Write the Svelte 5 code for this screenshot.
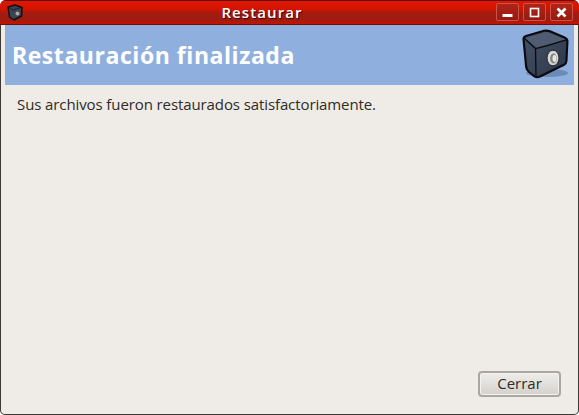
<script lang="ts">
  const title = 'Restaurar';
  const heading = 'Restauración finalizada';
  const message = 'Sus archivos fueron restaurados satisfactoriamente.';
</script>

<div class="window">
  <header class="titlebar">
    <svg class="app-icon" width="16" height="17" viewBox="0 0 16 17">
      <path d="M1 3 L8 1 L15 3.500 L14.500 12 L7 16 L2.500 13 Z" fill="#3a4454" stroke="#111" stroke-width="1.500" stroke-linejoin="round" />
      <path d="M2 3.500 L6 6 L14 3.500" fill="none" stroke="#151518" stroke-width="0.800" />
      <circle cx="10.500" cy="9.500" r="2" fill="#a8a8a8" />
    </svg>
    <span class="title">{title}</span>
    <div class="controls">
      <button class="ctl" aria-label="Minimizar">
        <svg width="11" height="11" viewBox="0 0 11 11"><rect x="0.500" y="7" width="10" height="3" fill="#fff" /></svg>
      </button>
      <button class="ctl" aria-label="Maximizar">
        <svg width="11" height="11" viewBox="0 0 11 11"><rect x="1.500" y="1.500" width="8" height="8" fill="none" stroke="#fff" stroke-width="1.600" /></svg>
      </button>
      <button class="ctl" aria-label="Cerrar">
        <svg width="11" height="11" viewBox="0 0 11 11"><path d="M1.500 1.500 L9.500 9.500 M9.500 1.500 L1.500 9.500" stroke="#fff" stroke-width="2.600" /></svg>
      </button>
    </div>
  </header>

  <div class="content">
    <div class="banner">
      <h1>{heading}</h1>
      <svg class="safe" width="48" height="52" viewBox="0 0 48 52">
        <defs>
          <linearGradient id="front" x1="0" y1="0" x2="1" y2="1">
            <stop offset="0" stop-color="#46536a" />
            <stop offset="1" stop-color="#2c3646" />
          </linearGradient>
        </defs>
        <ellipse cx="26" cy="44" rx="21" ry="4" fill="#5f7ea8" opacity="0.75" />
        <path d="M2.500 10 C2.500 8.500 3.500 7.500 5 7 L23 1.800 C25 1.300 27 1.500 29 2.300 L43.500 8.500 C45.500 9.400 46.500 10.500 46.400 12.500 L45.400 32 C45.300 34 44.500 35 43 35.800 L19 47.500 C17 48.400 15 48.300 13.500 47.300 L8 43 C6.500 41.800 5.500 40 5.200 38 Z" fill="url(#front)" stroke="#0b0b0e" stroke-width="2.200" stroke-linejoin="round" />
        <path d="M4.500 9.500 L15 18.500 L44.500 10.500 L28 3.800 C26.500 3.200 25 3.100 23.500 3.500 L6 8.500 Z" fill="#4f5c72" />
        <path d="M3.500 9.500 L14.500 19.500 C19 19 35 14 45.500 10.800 M14.500 19.500 L15 47" fill="none" stroke="#0b0b0e" stroke-width="1.300" />
        <ellipse cx="32" cy="29" rx="6" ry="7.800" fill="#d6d6d2" stroke="#20242c" stroke-width="1" />
        <ellipse cx="32.500" cy="29.500" rx="3.400" ry="5" fill="#85857f" />
        <ellipse cx="33.500" cy="29.500" rx="2" ry="3.400" fill="#e6e6e2" />
      </svg>
    </div>
    <p class="message">{message}</p>
    <div class="actions">
      <button class="close">Cerrar</button>
    </div>
  </div>
</div>

<style>
  :global(body) {
    margin: 0;
    background: #fff;
  }

  .window {
    width: 579px;
    height: 415px;
    box-sizing: border-box;
    display: flex;
    flex-direction: column;
    background: #efebe6;
    border-radius: 6px 6px 5px 5px;
    overflow: hidden;
    font-family: "Open Sans", "Noto Sans", sans-serif;
    box-shadow: inset 0 0 0 1px #3c3833;
  }

  .titlebar {
    height: 25px;
    flex-shrink: 0;
    box-sizing: border-box;
    display: flex;
    align-items: center;
    padding: 0 6px 1px 7px;
    background: linear-gradient(#e01600 0, #d01400 38%, #a31c12 52%, #9e1b10 82%, #c81300 100%);
    border-top: 1px solid #5a0f08;
    border-bottom: 1px solid #6d1008;
  }

  .app-icon {
    flex-shrink: 0;
  }

  .title {
    flex: 1;
    margin-left: 5px;
    text-align: center;
    color: #fff;
    font-size: 15px;
    font-weight: 600;
    text-shadow: 1px 1px 1px #3a0500;
    letter-spacing: 1.1px;
  }

  .controls {
    display: flex;
    gap: 4px;
  }

  .ctl {
    width: 23px;
    height: 18px;
    padding: 0;
    display: flex;
    align-items: center;
    justify-content: center;
    background: linear-gradient(#b02418, #98190f);
    border: 1px solid #c9544c;
    border-radius: 2px;
  }

  .content {
    flex: 1;
    display: flex;
    flex-direction: column;
    padding: 0 5px 18px;
    min-height: 0;
  }

  .banner {
    height: 60px;
    flex-shrink: 0;
    display: flex;
    align-items: center;
    justify-content: space-between;
    background: #8fb0df;
    padding: 0 5px 0 7px;
  }

  h1 {
    margin: 0;
    color: #fff;
    font-size: 23px;
    font-weight: 700;
    letter-spacing: 0.55px;
  }

  .message {
    margin: 9px 0 0 12px;
    font-size: 15px;
    letter-spacing: -0.1px;
    color: #2e2c28;
  }

  .actions {
    margin-top: auto;
    display: flex;
    justify-content: flex-end;
    padding-right: 13px;
  }

  .close {
    width: 83px;
    height: 26px;
    padding: 0 0 3px;
    font-family: inherit;
    font-size: 15px;
    color: #2e2c28;
    background: linear-gradient(#efedea, #d4d1cd);
    border: 2px solid #a9a7a3;
    border-radius: 4px;
    box-shadow: inset 0 0 0 1px #f4f2ef;
  }
</style>
